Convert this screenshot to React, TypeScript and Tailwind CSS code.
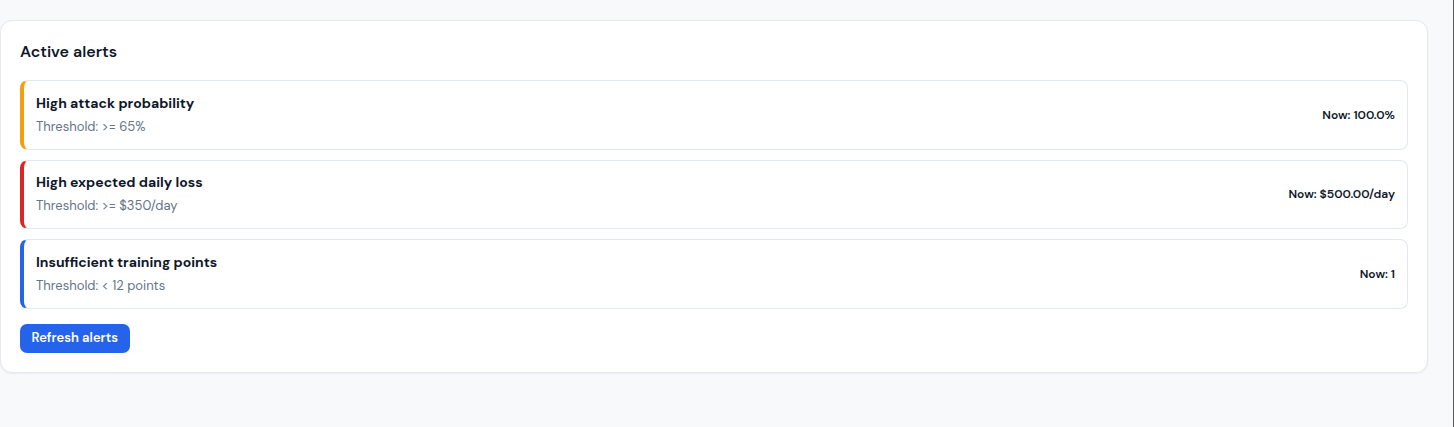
import React from "react";

const alerts = [
  { title: "High attack probability", threshold: "Threshold: >= 65%", now: "Now: 100.0%", color: "border-l-[#f59e0b]" },
  { title: "High expected daily loss", threshold: "Threshold: >= $350/day", now: "Now: $500.00/day", color: "border-l-[#dc2626]" },
  { title: "Insufficient training points", threshold: "Threshold: < 12 points", now: "Now: 1", color: "border-l-[#2563eb]" },
];

export default function App() {
  return (
    <div
      className="h-[427px] w-full bg-[#f8f9fb] border-r border-[#5a5a5a] pt-[20px]"
      style={{ fontFamily: '"DM Sans", Inter, "Noto Sans", sans-serif' }}
    >
      <div className="w-[1428px] rounded-[12px] border border-[#e4e8ef] bg-white px-[19px] pt-[21px] pb-[19px] shadow-[0_1px_2px_rgba(15,23,42,0.05)]">
        <h2 className="text-[16px] font-semibold leading-[20px] text-[#0f172a]">Active alerts</h2>
        <div className="mt-[18px] flex flex-col gap-[10px]">
          {alerts.map((a) => (
            <div
              key={a.title}
              className={`flex h-[69.5px] items-center justify-between rounded-[8px] border border-[#e2e8f0] border-l-[4px] ${a.color} pl-[12px] pr-[12px]`}
            >
              <div className="flex flex-col">
                <div className="text-[14px] font-bold leading-[18px] text-[#0f172a]">{a.title}</div>
                <div className="mt-[6px] text-[13px] leading-[18px] text-[#64748b]">{a.threshold}</div>
              </div>
              <div className="text-[12px] font-semibold text-[#0f172a]">{a.now}</div>
            </div>
          ))}
        </div>
        <button className="mt-[15px] h-[29px] rounded-[7px] bg-[#2563eb] px-[11.5px] text-[13px] font-semibold text-white">
          Refresh alerts
        </button>
      </div>
    </div>
  );
}
